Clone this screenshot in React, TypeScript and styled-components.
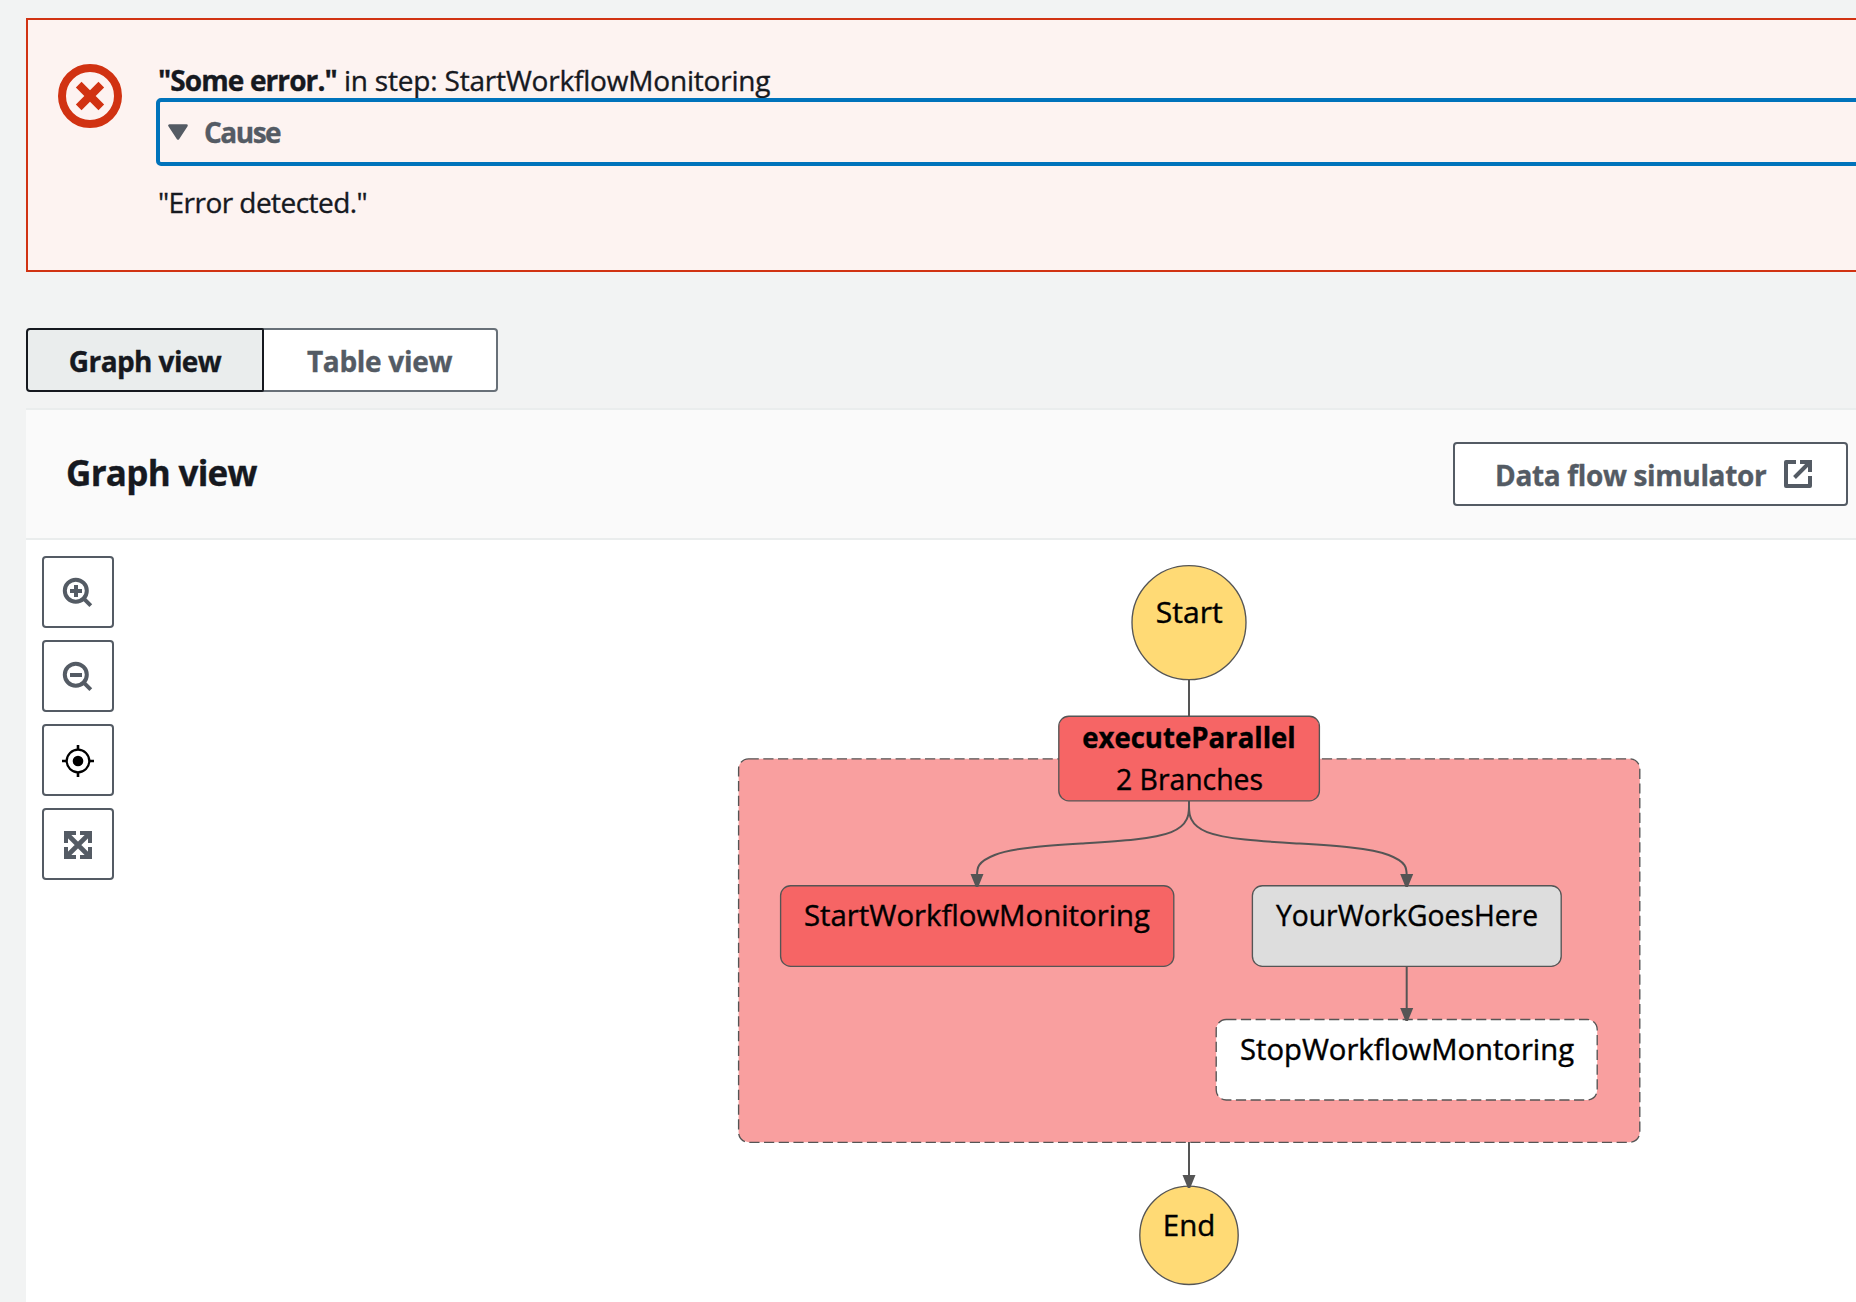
import React from "react";
import styled, { createGlobalStyle } from "styled-components";

const fontStack = `"Open Sans", "Noto Sans", sans-serif`;

const colors = {
  ink: "#16191f",
  muted: "#545b64",
  divider: "#eaeded",
  page: "#f2f3f3",
  error: "#d13212",
  focus: "#0073bb",
  line: "#555555",
};

const GlobalStyle = createGlobalStyle`
  * { box-sizing: border-box; }
  body { margin: 0; background: ${colors.page}; overflow: hidden; }
  button { font: inherit; margin: 0; }
`;

const Page = styled.main`
  display: flex;
  flex-direction: column;
  height: 1302px;
  padding: 18px 0 0 26px;
  overflow: hidden;
  font-family: ${fontStack};
  font-size: 28px;
  color: ${colors.ink};
  -webkit-text-stroke: 0.35px currentColor;
`;

const Banner = styled.section`
  display: flex;
  gap: 35px;
  flex: none;
  height: 254px;
  margin-right: -40px;
  padding: 42px 0 0 30px;
  border: 2px solid ${colors.error};
  background: #fdf3f1;
`;

const ErrorIcon = styled.svg`
  flex: none;
  width: 64px;
  height: 64px;
  margin-top: 2px;
`;

const BannerBody = styled.div`
  flex: 1;
  display: flex;
  flex-direction: column;
`;

const BannerText = styled.p<{ $spacing: number }>`
  margin: 0;
  padding-left: 1px;
  line-height: 36px;
  letter-spacing: ${(p) => p.$spacing}px;
  white-space: nowrap;
`;

const Strong = styled.strong`
  font-weight: 700;
  letter-spacing: -0.9px;
`;

const CauseToggle = styled.button`
  display: flex;
  align-items: center;
  gap: 16px;
  height: 68px;
  margin: 0 0 18px -1px;
  padding: 0 0 0 8px;
  border: 4px solid ${colors.focus};
  border-radius: 5px;
  background: transparent;
  color: ${colors.muted};
  font-weight: 700;
  letter-spacing: -1.5px;
`;

const Caret = styled.svg`
  width: 20px;
  height: 16px;
`;

const Tabs = styled.div`
  display: flex;
  flex: none;
  margin-top: 56px;
`;

const Tab = styled.button<{ $active?: boolean }>`
  position: relative;
  z-index: ${(p) => (p.$active ? 1 : 0)};
  width: ${(p) => (p.$active ? 238 : 236)}px;
  height: 64px;
  margin-left: ${(p) => (p.$active ? 0 : -2)}px;
  padding: ${(p) => (p.$active ? "1px 0 0" : "1px 1px 0 0")};
  border: 2px solid ${(p) => (p.$active ? colors.ink : "#687078")};
  border-radius: ${(p) => (p.$active ? "4px 2px 2px 4px" : "0 4px 4px 0")};
  background: ${(p) => (p.$active ? "#eaeded" : "#ffffff")};
  color: ${(p) => (p.$active ? colors.ink : colors.muted)};
  font-weight: 700;
  letter-spacing: ${(p) => (p.$active ? -0.6 : -0.3)}px;
`;

const Panel = styled.section`
  flex: 1;
  display: flex;
  flex-direction: column;
  margin-top: 16px;
  border-top: 2px solid ${colors.divider};
  background: #ffffff;
`;

const PanelHeader = styled.header`
  display: flex;
  align-items: center;
  justify-content: space-between;
  flex: none;
  height: 130px;
  padding: 0 8px 0 40px;
  border-bottom: 2px solid ${colors.divider};
  background: #fafafa;
`;

const Title = styled.h2`
  margin: 0 0 2px;
  font-size: 35px;
  line-height: 48px;
  letter-spacing: -0.7px;
`;

const LinkButton = styled.button`
  display: flex;
  align-items: center;
  justify-content: space-between;
  width: 395px;
  height: 64px;
  padding: 1px 34px 0 40px;
  border: 2px solid ${colors.muted};
  border-radius: 4px;
  background: #ffffff;
  color: ${colors.muted};
  font-weight: 700;
  letter-spacing: -0.35px;
  white-space: nowrap;
`;

const ExternalIcon = styled.svg`
  width: 28px;
  height: 28px;
  margin-top: -1px;
`;

const Workspace = styled.div`
  flex: 1;
  display: flex;
  padding-left: 16px;
`;

const Toolbar = styled.div`
  display: flex;
  flex-direction: column;
  gap: 12px;
  padding-top: 16px;
`;

const ToolButton = styled.button`
  display: flex;
  align-items: center;
  justify-content: center;
  width: 72px;
  height: 72px;
  padding: 0;
  border: 2px solid ${colors.muted};
  border-radius: 4px;
  background: #ffffff;
`;

const ToolIcon = styled.svg`
  width: 32px;
  height: 32px;
  overflow: visible;
`;

const Graph = styled.svg`
  flex: none;
  width: 1742px;
  height: 762px;
`;

const NodeLabel = styled.text<{ $bold?: boolean }>`
  font-family: ${fontStack};
  font-size: 29.3px;
  font-weight: ${(p) => (p.$bold ? 700 : 400)};
  fill: #000000;
  stroke: #000000;
  stroke-width: 0.4px;
`;

function ZoomIcon({ plus }: { plus?: boolean }) {
  return (
    <ToolIcon viewBox="0 0 32 32" fill="none" stroke={colors.muted} strokeWidth="4">
      <circle cx="13.8" cy="14.7" r="11" />
      <path d="M21.5 22.3 L28.8 29.6" />
      <path d={plus ? "M8 15H20M14 9V21" : "M8 15H20"} />
    </ToolIcon>
  );
}

function TargetIcon() {
  return (
    <ToolIcon viewBox="0 0 32 32" fill="none" stroke="#000000" strokeWidth="2.6">
      <circle cx="16" cy="17" r="11.3" strokeWidth="2.2" />
      <circle cx="16" cy="17" r="5.3" fill="#000000" stroke="none" />
      <path d="M16 1V6M16 28V33M0 17H5M27 17H32" />
    </ToolIcon>
  );
}

function ExpandIcon() {
  return (
    <ToolIcon viewBox="0 0 32 32" fill="none" stroke={colors.muted} strokeWidth="4">
      <path d="M4 15V5H14M18 5H28V15M28 19V29H18M14 29H4V19" />
      <path d="M4.5 5.5L27.5 28.5M27.5 5.5L4.5 28.5" strokeWidth="4.6" />
    </ToolIcon>
  );
}

function Arrow({ x, y }: { x: number; y: number }) {
  return <path d={`M${x - 6.5} ${y - 13}H${x + 6.5}L${x + 1.2} ${y}H${x - 1.2}Z`} fill={colors.line} />;
}

interface LabelProps {
  x: number;
  y: number;
  width: number;
  bold?: boolean;
  children: string;
}

function Label({ x, y, width, bold, children }: LabelProps) {
  return (
    <NodeLabel x={x} y={y} textLength={width} lengthAdjust="spacingAndGlyphs" textAnchor="middle" $bold={bold}>
      {children}
    </NodeLabel>
  );
}

function StepGraph() {
  const outline = { stroke: colors.line, strokeWidth: 1.35 };
  const dashed = { ...outline, strokeDasharray: "10.2 4.5" };
  const edge = { stroke: colors.line, strokeWidth: 2, fill: "none" };
  return (
    <Graph viewBox="114 540 1742 762">
      <rect x="738.6" y="758.8" width="901.2" height="383.5" rx="10" fill="#f99f9f" {...dashed} />
      <circle cx="1189" cy="622.6" r="57" fill="#ffda75" {...outline} />
      <path d="M1189 680V716" {...edge} />
      <path
        d="M1189 801L1189 807C1189 813 1189 825 1171.3 832.1C1153.7 839.2 1118 841.3 1083 843.5C1047.7 845.7 1012.3 847.8 994.7 855C977 862 977 868 977 876"
        {...edge}
      />
      <path
        d="M1189 801L1189 807C1189 813 1189 825 1207.1 832.1C1225.3 839.2 1261.6 841.3 1298 843.5C1334.2 845.7 1370.5 847.8 1388.6 855C1406.7 862 1406.7 868 1406.7 876"
        {...edge}
      />
      <rect x="1058.8" y="716.2" width="260.6" height="84.6" rx="10" fill="#f66565" {...outline} />
      <rect x="780.6" y="885.7" width="393.2" height="80.6" rx="10" fill="#f66565" {...outline} />
      <rect x="1252.4" y="885.7" width="308.8" height="80.6" rx="10" fill="#dddddd" {...outline} />
      <path d="M1406.7 966.5V1010" {...edge} />
      <rect x="1216.2" y="1019.5" width="381" height="80.5" rx="10" fill="#ffffff" {...dashed} />
      <path d="M1189 1142V1178" {...edge} />
      <circle cx="1189" cy="1235.3" r="49.2" fill="#ffda75" {...outline} />
      <Arrow x={977} y={887} />
      <Arrow x={1406.7} y={887} />
      <Arrow x={1406.7} y={1021} />
      <Arrow x={1189} y={1188} />
      <Label x={1189.3} y={622.7} width={67}>Start</Label>
      <Label x={1189} y={748.3} width={213.5} bold>executeParallel</Label>
      <Label x={1189.5} y={790} width={147}>2 Branches</Label>
      <Label x={977} y={926} width={346}>StartWorkflowMonitoring</Label>
      <Label x={1407} y={926} width={262}>YourWorkGoesHere</Label>
      <Label x={1407} y={1060} width={334}>StopWorkflowMontoring</Label>
      <Label x={1189} y={1236} width={52.5}>End</Label>
    </Graph>
  );
}

export default function App() {
  return (
    <>
      <GlobalStyle />
      <Page>
        <Banner>
          <ErrorIcon viewBox="0 0 64 64" fill="none" stroke={colors.error}>
            <circle cx="32" cy="32" r="28" strokeWidth="8" />
            <path d="M20.7 20.7L43.3 43.3M43.3 20.7L20.7 43.3" strokeWidth="8" />
          </ErrorIcon>
          <BannerBody>
            <BannerText $spacing={-0.19}>
              <Strong>"Some error."</Strong> in step: StartWorkflowMonitoring
            </BannerText>
            <CauseToggle>
              <Caret viewBox="0 0 20 16">
                <path
                  d="M1.5 1.5H18.5L10 14.5Z"
                  fill={colors.muted}
                  stroke={colors.muted}
                  strokeWidth="2.6"
                  strokeLinejoin="round"
                />
              </Caret>
              Cause
            </CauseToggle>
            <BannerText $spacing={-0.55}>"Error detected."</BannerText>
          </BannerBody>
        </Banner>
        <Tabs>
          <Tab $active>Graph view</Tab>
          <Tab>Table view</Tab>
        </Tabs>
        <Panel>
          <PanelHeader>
            <Title>Graph view</Title>
            <LinkButton>
              Data flow simulator
              <ExternalIcon viewBox="0 0 28 28" fill="none" stroke={colors.muted} strokeWidth="4">
                <path d="M12 2H2V26H26V16" strokeLinejoin="round" />
                <path d="M16 2H26V12M25.5 2.5L10.5 17.5" />
              </ExternalIcon>
            </LinkButton>
          </PanelHeader>
          <Workspace>
            <Toolbar>
              <ToolButton aria-label="Zoom in"><ZoomIcon plus /></ToolButton>
              <ToolButton aria-label="Zoom out"><ZoomIcon /></ToolButton>
              <ToolButton aria-label="Center graph"><TargetIcon /></ToolButton>
              <ToolButton aria-label="Fit graph"><ExpandIcon /></ToolButton>
            </Toolbar>
            <StepGraph />
          </Workspace>
        </Panel>
      </Page>
    </>
  );
}
